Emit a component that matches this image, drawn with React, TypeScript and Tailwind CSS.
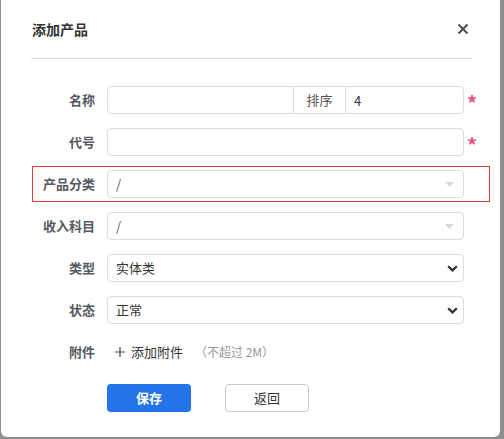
import { useState } from "react";

const font = { fontFamily: '"Noto Sans CJK SC", "Noto Sans", sans-serif' };

function Caret() {
  return (
    <svg width="9" height="5" viewBox="0 0 9 5" className="absolute right-[10px] top-[12px]">
      <path d="M0 0h9L4.5 5z" fill="#d6d8dd" />
    </svg>
  );
}

function Chevron() {
  return (
    <svg
      width="11"
      height="7"
      viewBox="0 0 11 7"
      className="pointer-events-none absolute right-[6px] top-[11px]"
    >
      <path d="M1.2 1.2L5.5 5.4 9.8 1.2" fill="none" stroke="#2d3138" strokeWidth="2.2" />
    </svg>
  );
}

function Row({
  label,
  required,
  highlight,
  children,
}: {
  label: string;
  required?: boolean;
  highlight?: boolean;
  children: React.ReactNode;
}) {
  return (
    <div
      className={
        "flex h-[36px] items-center border " +
        (highlight ? "border-[#e83a3a]" : "border-transparent")
      }
    >
      <div className="w-[62px] text-right text-[13px] font-bold text-[#555a61]">{label}</div>
      <div className="ml-[12px] w-[357px]">{children}</div>
      <div className="ml-[3px] w-[16px] pt-[6px] text-[20px] font-bold leading-none text-[#f2507a]">
        {required ? "*" : ""}
      </div>
    </div>
  );
}

const inputCls =
  "h-[28px] w-full rounded-[4px] border border-[#d9dce3] bg-white px-[8px] text-[13px] text-[#333] outline-none";

export default function App() {
  const [order, setOrder] = useState("4");

  return (
    <div className="h-[439px] w-[504px] overflow-hidden bg-[#8e8e8e]" style={font}>
      <div className="ml-[1px] h-[437px] w-[499px] rounded-b-[6px] bg-white">
        {/* Header */}
        <div className="flex h-[58px] items-center justify-between pl-[31px] pr-[31px]">
          <h1 className="text-[14px] font-bold text-[#333]">添加产品</h1>
          <svg width="12" height="12" viewBox="0 0 12 12">
            <path d="M1.5 1.5l9 9M10.5 1.5l-9 9" stroke="#4a4f57" strokeWidth="2" />
          </svg>
        </div>
        <div className="ml-[30px] h-px w-[441px] bg-[#dcd8e6]" />

        {/* Form */}
        <div className="ml-[31px] mt-[23px] flex w-[458px] flex-col gap-[6px]">
          <Row label="名称" required>
            <div className="flex h-[28px]">
              <input className="h-[28px] w-[187px] min-w-0 shrink-0 rounded-l-[4px] border border-[#d9dce3] px-[8px] text-[13px] outline-none" />
              <span className="flex h-[28px] w-[51px] shrink-0 items-center justify-center border-y border-[#d9dce3] text-[13px] text-[#555]">
                排序
              </span>
              <input
                value={order}
                onChange={(e) => setOrder(e.target.value)}
                className="h-[28px] min-w-0 flex-1 rounded-r-[4px] border border-[#d9dce3] px-[8px] text-[13px] text-[#333] outline-none"
              />
            </div>
          </Row>
          <Row label="代号" required>
            <input className={inputCls} />
          </Row>
          <Row label="产品分类" highlight>
            <div className="relative">
              <div className={inputCls + " flex items-center text-[#555]"}>/</div>
              <Caret />
            </div>
          </Row>
          <Row label="收入科目">
            <div className="relative">
              <div className={inputCls + " flex items-center text-[#555]"}>/</div>
              <Caret />
            </div>
          </Row>
          <Row label="类型">
            <div className="relative">
              <select className={inputCls + " appearance-none"} defaultValue="实体类">
                <option>实体类</option>
                <option>服务类</option>
              </select>
              <Chevron />
            </div>
          </Row>
          <Row label="状态">
            <div className="relative">
              <select className={inputCls + " appearance-none"} defaultValue="正常">
                <option>正常</option>
                <option>停用</option>
              </select>
              <Chevron />
            </div>
          </Row>
          <Row label="附件">
            <div className="flex items-center text-[13px]">
              <svg width="10" height="10" viewBox="0 0 10 10" className="ml-[8px]">
                <path d="M5 0v10M0 5h10" stroke="#444" strokeWidth="1.2" />
              </svg>
              <span className="ml-[6px] text-[#333]">添加附件</span>
              <span className="ml-[12px] text-[12px] text-[#999]">（不超过 2M）</span>
            </div>
          </Row>

          <div className="ml-[75px] mt-[8px] flex gap-[34px]">
            <button className="h-[28px] w-[84px] rounded-[4px] bg-[#2474e9] text-[13px] font-bold text-white">
              保存
            </button>
            <button className="h-[28px] w-[84px] rounded-[4px] border border-[#c9c9c9] bg-white text-[13px] text-[#333]">
              返回
            </button>
          </div>
        </div>
      </div>
    </div>
  );
}
